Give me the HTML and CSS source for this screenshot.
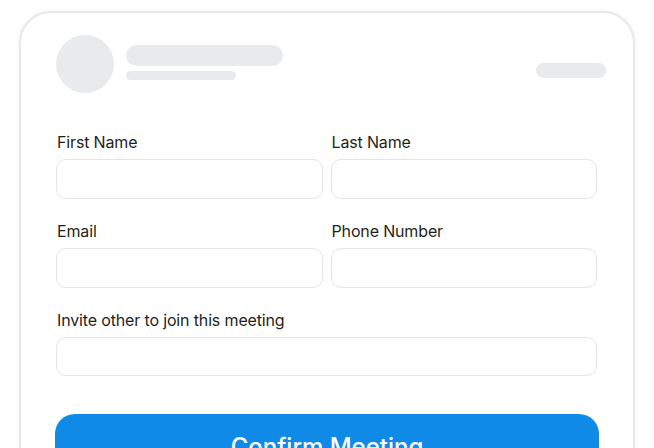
FILE: index.html
```html
<!DOCTYPE html>
<html lang="en">
<head>
    <meta charset="UTF-8">
    <meta name="viewport" content="width=device-width, initial-scale=1.0">
    <title>Confirm Meeting</title>
    <link rel="stylesheet" href="styles.css">
</head>
<body>

    <div class="card">
        <div class="card-head">
            <div class="avatar"></div>
            <div class="head-lines">
                <div class="line line-title"></div>
                <div class="line line-sub"></div>
            </div>
            <div class="line line-tag"></div>
        </div>

        <form class="form">
            <div class="row">
                <label class="field">
                    <span class="field-label">First Name</span>
                    <input class="field-input" type="text">
                </label>
                <label class="field">
                    <span class="field-label">Last Name</span>
                    <input class="field-input" type="text">
                </label>
            </div>
            <div class="row">
                <label class="field">
                    <span class="field-label">Email</span>
                    <input class="field-input" type="email">
                </label>
                <label class="field">
                    <span class="field-label">Phone Number</span>
                    <input class="field-input" type="tel">
                </label>
            </div>
            <label class="field">
                <span class="field-label">Invite other to join this meeting</span>
                <input class="field-input" type="text">
            </label>

            <button class="confirm-btn" type="button">Confirm Meeting</button>
        </form>
    </div>

</body>
</html>
```

FILE: styles.css
```css
:root {
    --skeleton: #e9eaeb;
    --line: #e3e4e6;
    --brand: #0f8ae7;
}

body, html {
    margin: 0; padding: 0;
    background: #fff;
    overflow: hidden;
    font-family: 'Inter', 'Liberation Sans', sans-serif;
    color: #1d1d1f;
}

.card {
    margin: 11px 0 0 19px;
    width: 616px; height: 520px;
    box-sizing: border-box;
    border: 2px solid #e8e8e9;
    border-radius: 32px;
    background: #fff;
    box-shadow: 0 0 6px rgba(0, 0, 0, 0.05);
    padding: 22px 27px 0 35px;
}

/* skeleton header */
.card-head { display: flex; align-items: center; }
.avatar {
    width: 58px; height: 58px; border-radius: 50%;
    background: var(--skeleton); flex: none;
}
.head-lines {
    display: flex; flex-direction: column; gap: 5px;
    margin-left: 12px; margin-top: -4px; flex: 1;
}
.line { background: var(--skeleton); border-radius: 20px; }
.line-title { width: 157px; height: 21px; }
.line-sub { width: 110px; height: 9px; }
.line-tag { width: 70px; height: 15px; margin-top: 12px; }

/* form */
.form {
    display: flex; flex-direction: column; gap: 23px;
    margin-top: 40px; padding-right: 9px;
}
.row { display: grid; grid-template-columns: minmax(0, 1fr) minmax(0, 1fr); gap: 8px; }
.field { display: flex; flex-direction: column; gap: 7px; min-width: 0; }
.field-label { font-size: 16px; line-height: 19px; color: #1f1f21; letter-spacing: -0.15px; padding-left: 1px; }
.field-input {
    width: 100%; min-width: 0;
    height: 40px; box-sizing: border-box;
    border: 1px solid var(--line); border-radius: 10px;
    background: #fff; outline: none; padding: 0 12px;
    font: inherit;
}
.form > .field .field-input { height: 39px; }

.confirm-btn {
    margin: 15px -2px 0 -1px;
    height: 60px;
    border: none; border-radius: 20px;
    background: var(--brand); color: #fff;
    font-family: inherit; font-size: 24px; font-weight: 500;
    padding-top: 5px;
}
```
